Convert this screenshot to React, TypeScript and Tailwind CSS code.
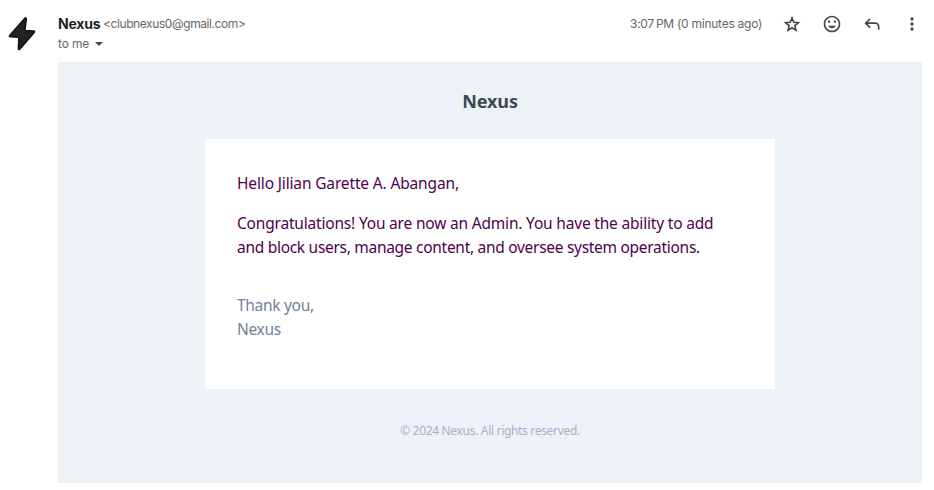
import React from "react";

const icon = "size-5 shrink-0 fill-[#444746]";

function Header() {
  return (
    <header className="flex h-[62px] pl-2 pr-3">
      <svg viewBox="0 0 28 36" className="mt-4 h-9 w-7 shrink-0">
        <path
          d="M16.8 2.2 1.5 19.8Q1 20.6 2 20.7L10.8 21.2 10.3 32.8Q10.6 34.2 11.8 33.2L26.4 16.2Q27 15.1 25.8 15L16.9 14.4 18.4 3Q18.2 1 16.8 2.2Z"
          fill="#222"
          stroke="#111"
          strokeWidth="1.4"
          strokeLinejoin="round"
        />
      </svg>
      <div className="ml-[22px] flex flex-1 flex-col pt-3.5 font-['Inter','Liberation_Sans',sans-serif]">
        <div className="flex h-5 items-center whitespace-nowrap">
          <span className="w-[45px] text-sm font-bold tracking-[-0.2px] text-[#1f1f1f]">Nexus</span>
          <span className="text-xs tracking-[-0.41px] text-[#666]">&lt;clubnexus0@gmail.com&gt;</span>
        </div>
        <div className="flex h-5 items-center text-xs text-[#666]">
          <span className="w-[37px] tracking-[-0.15px]">to me</span>
          <svg viewBox="0 0 8 4" className="h-1 w-2 fill-[#444746]">
            <path d="M0 0h8L4 4z" />
          </svg>
        </div>
      </div>
      <div className="flex h-12 items-center gap-5 font-['Inter','Liberation_Sans',sans-serif]">
        <span className="w-[132px] whitespace-nowrap text-xs tracking-[-0.26px] text-[#666]">3:07{"\u202f"}PM (0 minutes ago)</span>
        <svg viewBox="0 0 24 24" className={icon}>
          <path
            d="M12 4.700 14.150 9.900 19.700 10.350 15.450 14 16.750 19.450 12 16.550 7.250 19.450 8.550 14 4.300 10.350 9.850 9.900Z"
            fill="none"
            stroke="#444746"
            strokeWidth="2"
          />
        </svg>
        <svg viewBox="0 0 24 24" className={icon}>
          <path d="M11.99 2C6.47 2 2 6.48 2 12s4.47 10 9.99 10C17.52 22 22 17.52 22 12S17.52 2 11.99 2zM12 20c-4.42 0-8-3.58-8-8s3.58-8 8-8 8 3.58 8 8-3.58 8-8 8z" />
          <circle cx="8.5" cy="9.2" r="1.4" />
          <circle cx="15.5" cy="9.2" r="1.4" />
          <path d="M7.500 14h9c-.7 1.800-2.300 3-4.500 3s-3.800-1.200-4.500-3z" />
        </svg>
        <svg viewBox="0 0 24 24" className={icon}>
          <path d="M19 19v-4q0-1.250-.875-2.125T16 12H6.825l3.600 3.600L9 17l-6-6 6-6 1.425 1.400L6.825 10H16q2.075 0 3.537 1.463T21 15v4z" />
        </svg>
        <svg viewBox="0 0 24 24" className={icon}>
          <circle cx="12" cy="6" r="2" />
          <circle cx="12" cy="12" r="2" />
          <circle cx="12" cy="18" r="2" />
        </svg>
      </div>
    </header>
  );
}

export default function App() {
  return (
    <div className="h-[490px] w-[934px] overflow-hidden bg-white">
      <Header />
      <main className="ml-[58px] flex h-[421px] w-[864px] flex-col items-center bg-[#edf2f7] font-['Noto_Sans',sans-serif]">
        <h1 className="mt-[25px] h-[52px] whitespace-nowrap text-[18px] font-bold leading-7 tracking-[-0.1px] text-[#3d4852]">Nexus</h1>
        <section className="h-[250px] w-[570px] rounded-xs bg-white px-8 pt-8 text-[15.5px] leading-6 text-[#500050]">
          <p className="mb-4 whitespace-nowrap tracking-[-0.15px]">Hello Jilian Garette A. Abangan,</p>
          <p className="whitespace-nowrap tracking-[-0.19px]">
            Congratulations! You are now an Admin. You have the ability to add
            <br />
            <span className="tracking-[-0.29px]">and block users, manage content, and oversee system operations.</span>
          </p>
          <p className="mt-[34px] tracking-[-0.3px] text-[#718096]">
            Thank you,
            <br />
            Nexus
          </p>
        </section>
        <footer className="mt-[33px] whitespace-nowrap text-xs leading-[18px] tracking-[-0.32px] text-[#b0adc5]">© 2024 Nexus. All rights reserved.</footer>
      </main>
    </div>
  );
}
